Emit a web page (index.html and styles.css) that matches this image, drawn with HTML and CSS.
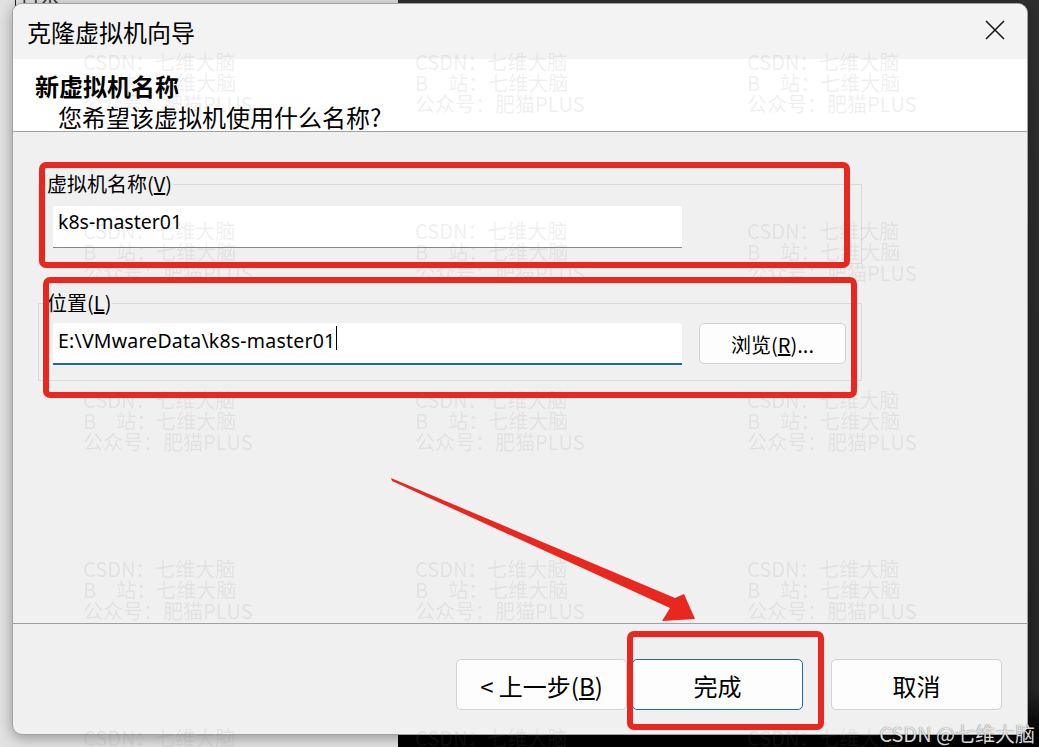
FILE: index.html
```html
<!DOCTYPE html>
<html lang="zh-CN">
<head>
  <meta charset="UTF-8" />
  <meta name="viewport" content="width=device-width, initial-scale=1.0" />
  <title>克隆虚拟机向导</title>
  <link rel="stylesheet" href="styles.css">
</head>
<body>

  <div class="backdrop-text">日本</div>

  <div class="window">
    <div class="titlebar">
      <span class="title">克隆虚拟机向导</span>
      <svg class="close" width="20" height="20" viewBox="0 0 20 20">
        <path d="M1 1 L19 19 M19 1 L1 19" stroke="#1a1a1a" stroke-width="1.6" fill="none"/>
      </svg>
    </div>

    <div class="header">
      <div class="heading">新虚拟机名称</div>
      <div class="subheading">您希望该虚拟机使用什么名称?</div>
    </div>

    <div class="content">
      <fieldset class="group group-name">
        <legend>虚拟机名称(<u>V</u>)</legend>
        <div class="field">k8s-master01</div>
      </fieldset>

      <fieldset class="group group-location">
        <legend>位置(<u>L</u>)</legend>
        <div class="row">
          <div class="field focused">E:\VMwareData\k8s-master01<span class="caret"></span></div>
          <button class="btn btn-browse">浏览(<u>R</u>)...</button>
        </div>
      </fieldset>
    </div>

    <div class="footer">
      <button class="btn btn-wizard">&lt; 上一步(<u>B</u>)</button>
      <button class="btn btn-wizard btn-default">完成</button>
      <button class="btn btn-wizard btn-cancel">取消</button>
    </div>
  </div>

  <!-- tiled watermark over the screenshot -->
  <div class="watermark">
    <div><p>CSDN：七维大脑</p><p>B　站：七维大脑</p><p>公众号：肥猫PLUS</p></div>
    <div><p>CSDN：七维大脑</p><p>B　站：七维大脑</p><p>公众号：肥猫PLUS</p></div>
    <div><p>CSDN：七维大脑</p><p>B　站：七维大脑</p><p>公众号：肥猫PLUS</p></div>
    <div><p>CSDN：七维大脑</p><p>B　站：七维大脑</p><p>公众号：肥猫PLUS</p></div>
    <div><p>CSDN：七维大脑</p><p>B　站：七维大脑</p><p>公众号：肥猫PLUS</p></div>
    <div><p>CSDN：七维大脑</p><p>B　站：七维大脑</p><p>公众号：肥猫PLUS</p></div>
    <div><p>CSDN：七维大脑</p><p>B　站：七维大脑</p><p>公众号：肥猫PLUS</p></div>
    <div><p>CSDN：七维大脑</p><p>B　站：七维大脑</p><p>公众号：肥猫PLUS</p></div>
    <div><p>CSDN：七维大脑</p><p>B　站：七维大脑</p><p>公众号：肥猫PLUS</p></div>
    <div><p>CSDN：七维大脑</p><p>B　站：七维大脑</p><p>公众号：肥猫PLUS</p></div>
    <div><p>CSDN：七维大脑</p><p>B　站：七维大脑</p><p>公众号：肥猫PLUS</p></div>
    <div><p>CSDN：七维大脑</p><p>B　站：七维大脑</p><p>公众号：肥猫PLUS</p></div>
    <div><p>CSDN：七维大脑</p></div>
    <div><p>CSDN：七维大脑</p></div>
    <div><p>CSDN：七维大脑</p></div>
  </div>

  <!-- red annotation marks -->
  <svg class="annotations" width="1039" height="747" viewBox="0 0 1039 747">
    <g fill="none" stroke="#e8281e" stroke-width="6">
      <rect x="42" y="165" width="805" height="100" rx="4"/>
      <rect x="46" y="280" width="808" height="115" rx="4"/>
      <rect x="630" y="634" width="191" height="93" rx="4"/>
    </g>
    <polygon fill="#e8281e" points="391,478 675,598 684,594 695,619 662,621 670,608 392,481"/>
  </svg>

  <div class="csdn-mark">CSDN @七维大脑</div>

</body>
</html>
```

FILE: styles.css
```css
html {
  overflow: hidden;
}
body {
  margin: 0;
  width: 1039px;
  height: 747px;
  box-sizing: border-box;
  padding: 3px 0 0 12px;
  overflow: hidden;
  font-family: "Noto Sans CJK SC", sans-serif;
  color: #000;
  background:
    linear-gradient(to right, #e2e2e2 398px, transparent 398px),
    linear-gradient(#2f2f2f, #272727 690px, #000 735px);
}
.backdrop-text {
  position: absolute;
  z-index: -1;
  top: -16px;
  left: 15px;
  padding-left: 4px;
  border-left: 1px solid #222;
  font-size: 20px;
  color: #333;
}

/* dialog window */
.window {
  width: 1016px;
  height: 732px;
  box-sizing: border-box;
  border: 1px solid #a3a3a3;
  border-radius: 10px;
  overflow: hidden;
  display: flex;
  flex-direction: column;
  background: #f0f0f0;
  box-shadow: 0 3px 14px rgba(0, 0, 0, 0.35);
}
.titlebar {
  height: 55px;
  flex: none;
  display: flex;
  align-items: center;
  justify-content: space-between;
  padding: 0 22px 0 14px;
  background: #f3f3f3;
}
.title {
  font-size: 24px;
  line-height: 1;
}
.close {
  margin-bottom: 4px;
}
.header {
  height: 73px;
  flex: none;
  box-sizing: border-box;
  padding: 11px 0 0 22px;
  background: #fff;
  border-bottom: 1px solid #a0a0a0;
}
.heading {
  font-size: 24px;
  font-weight: bold;
  line-height: 31px;
}
.subheading {
  font-size: 24px;
  line-height: 31px;
  padding-left: 23px;
}

/* group boxes */
.content {
  flex: 1;
  padding: 41px 0 0 25px;
}
.group {
  margin: 0;
  width: 824px;
  min-width: 0;
  box-sizing: border-box;
  border: 1px solid #d9d9d9;
  padding: 0 15px 15px 14px;
}
.group legend {
  font-size: 20px;
  line-height: 22px;
  padding: 0 1px;
  margin-left: -7px;
}
.group-location {
  margin-top: 28px;
}
.field {
  margin-top: 11px;
  width: 629px;
  height: 42px;
  box-sizing: border-box;
  padding: 3px 0 0 5px;
  background: #fff;
  border-bottom: 1px solid #868686;
  border-radius: 3px 3px 0 0;
  font-family: "Noto Sans", "Noto Sans CJK SC", sans-serif;
  font-size: 19.5px;
  line-height: 26px;
  white-space: nowrap;
}
.row {
  display: flex;
  align-items: flex-start;
  gap: 17px;
  margin-top: 9px;
}
.row .field {
  margin-top: 0;
}
.field.focused {
  border-bottom: 2px solid #1c6a98;
  letter-spacing: 0.2px;
}
.caret {
  display: inline-block;
  width: 1px;
  height: 24px;
  margin-left: 1px;
  background: #000;
  vertical-align: -2px;
}

/* buttons */
.btn {
  font-family: "Noto Sans CJK SC", sans-serif;
  color: #000;
  background: #fdfdfd;
  border: 1px solid #d2d2d2;
  border-radius: 5px;
  padding: 0;
}
.btn-browse {
  width: 147px;
  height: 41px;
  font-size: 20px;
  padding-top: 1px;
}
.footer {
  height: 111px;
  flex: none;
  box-sizing: border-box;
  display: flex;
  justify-content: flex-end;
  align-items: flex-start;
  padding: 35px 25px 0 0;
  border-top: 1px solid #a0a0a0;
}
.btn-wizard {
  width: 171px;
  height: 51px;
  font-size: 24px;
  padding-top: 2px;
}
.btn-default {
  margin-left: 5px;
  border-color: #1a6fb0;
}
.btn-cancel {
  margin-left: 28px;
}

/* overlays */
.watermark {
  position: absolute;
  left: 83px;
  top: 51px;
  height: 696px;
  overflow: hidden;
  display: grid;
  grid-template-columns: repeat(3, 332px);
  grid-auto-rows: 169px;
  font-size: 20px;
  line-height: 21px;
  color: rgba(120, 120, 120, 0.13);
  white-space: nowrap;
  pointer-events: none;
}
.watermark p {
  margin: 0;
}
.annotations {
  position: absolute;
  left: 0;
  top: 0;
  pointer-events: none;
}
.csdn-mark {
  position: absolute;
  right: 4px;
  bottom: 0;
  font-size: 20px;
  line-height: 26px;
  color: rgba(255, 255, 255, 0.85);
  text-shadow: 0 0 1px rgba(0, 0, 0, 0.7);
}
```
